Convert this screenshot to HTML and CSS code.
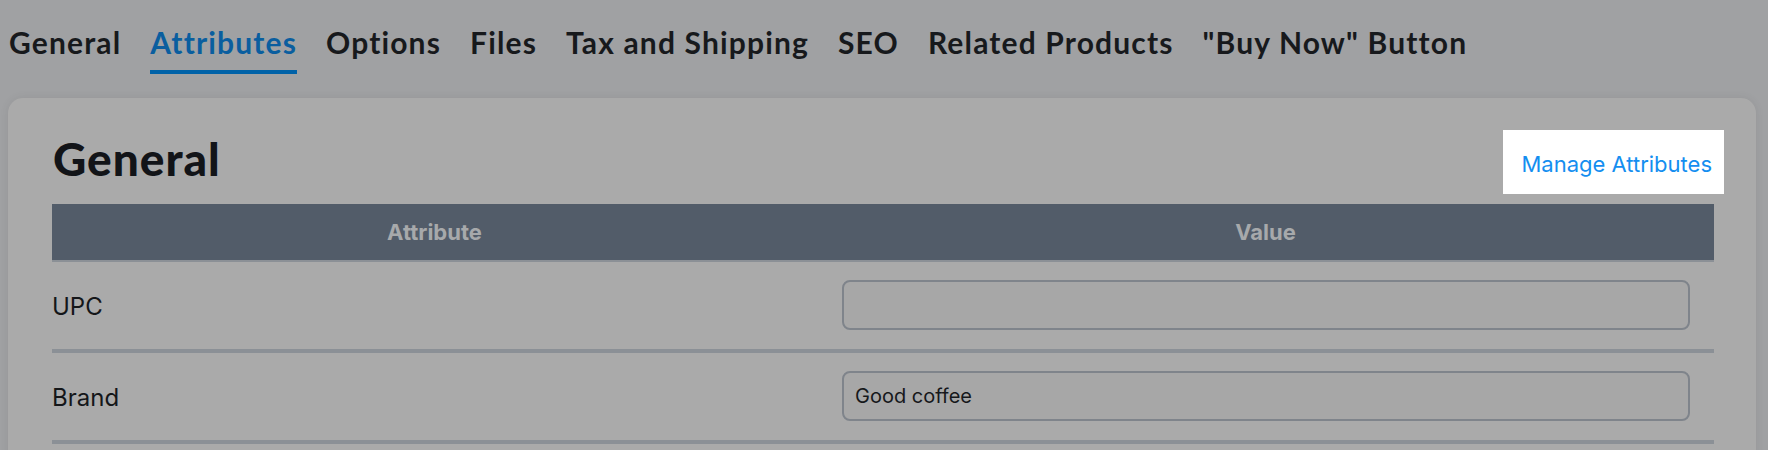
FILE: index.html
```html
<!DOCTYPE html>
<html lang="en">
<head>
<meta charset="utf-8">
<title>Product Attributes</title>
<link rel="stylesheet" href="styles.css">
</head>
<body>
<nav class="tabs">
  <a class="tab">General</a>
  <a class="tab tab-active">Attributes</a>
  <a class="tab">Options</a>
  <a class="tab">Files</a>
  <a class="tab">Tax and Shipping</a>
  <a class="tab">SEO</a>
  <a class="tab">Related Products</a>
  <a class="tab">"Buy Now" Button</a>
</nav>
<section class="card">
  <div class="card-head">
    <h1 class="card-title">General</h1>
    <a class="manage-link">Manage Attributes</a>
  </div>
  <div class="attr-table">
    <div class="attr-row attr-header">
      <div class="attr-col-name">Attribute</div>
      <div class="attr-col-value">Value</div>
    </div>
    <div class="attr-row">
      <div class="attr-name">UPC</div>
      <div class="attr-value"><input class="attr-input" type="text" value=""></div>
    </div>
    <div class="attr-row">
      <div class="attr-name">Brand</div>
      <div class="attr-value"><input class="attr-input" type="text" value="Good coffee"></div>
    </div>
  </div>
</section>
</body>
</html>
```
FILE: styles.css
```css
html, body {
  margin: 0;
  padding: 0;
}
body {
  background: #a0a1a3;
  font-family: Inter, "Liberation Sans", sans-serif;
  color: #141619;
  overflow: hidden;
}
.tabs {
  display: flex;
  gap: 29px;
  padding: 24px 0 0 9px;
  font-family: Lato, "Open Sans", sans-serif;
  font-weight: 700;
  font-size: 30px;
  line-height: 36px;
  letter-spacing: 1.15px;
}
.tab {
  display: block;
  padding-bottom: 10px;
  border-bottom: 4px solid transparent;
  color: #17191c;
  white-space: nowrap;
}
.tab-active {
  color: #0a5e9f;
  border-bottom-color: #0062a8;
}
.card {
  margin: 24px 12px 0 8px;
  padding: 32px 42px 60px 44px;
  background: #aaaaaa;
  border-radius: 15px;
  box-shadow: 0 0 10px rgba(0, 0, 0, 0.07);
}
.card-head {
  display: flex;
  justify-content: space-between;
  align-items: center;
  height: 64px;
  margin-bottom: 10px;
}
.card-title {
  margin: 0 0 0 1px;
  padding-bottom: 6px;
  font-family: Lato, "Open Sans", sans-serif;
  font-weight: 900;
  font-size: 46px;
  line-height: 64px;
  letter-spacing: 1px;
  color: #121418;
}
.manage-link {
  display: block;
  height: 60px;
  padding: 4px 12px 0 18px;
  margin-right: -10px;
  background: #ffffff;
  color: #148ef0;
  font-size: 22px;
  line-height: 60px;
  white-space: nowrap;
}
.attr-row {
  display: grid;
  grid-template-columns: 765px 1fr;
  align-items: center;
  border-bottom: 4px solid #8b9096;
  padding: 18px 0 19px;
}
.attr-header {
  background: #525c69;
  height: 56px;
  padding: 0;
  border-bottom-width: 2px;
  color: #a7a9ab;
  font-weight: 700;
  font-size: 22px;
  line-height: 56px;
  text-align: center;
}
.attr-name {
  padding-top: 4px;
  font-size: 24px;
  line-height: 30px;
}
.attr-value {
  padding: 0 24px 0 25px;
}
.attr-input {
  display: block;
  box-sizing: border-box;
  width: 100%;
  height: 50px;
  margin: 0;
  padding: 0 11px;
  border: 2px solid #7f848b;
  border-radius: 8px;
  background: #a7a7a7;
  font-family: Inter, "Liberation Sans", sans-serif;
  font-size: 20px;
  color: #16181b;
  outline: none;
}
```
